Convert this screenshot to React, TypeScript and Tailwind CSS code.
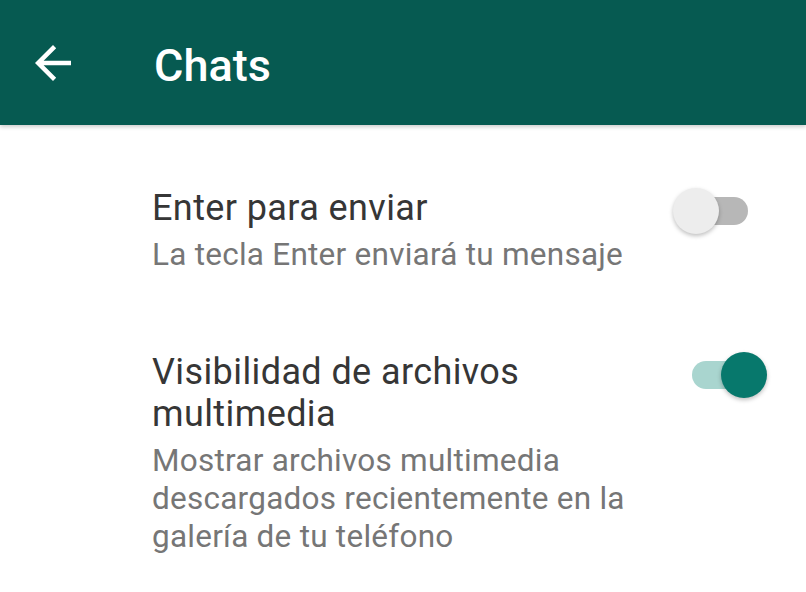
import { ReactNode } from "react";

function Toggle({ on }: { on: boolean }) {
  return (
    <div className="relative w-[94px] h-[46px] shrink-0">
      <div
        className={
          "absolute left-[19px] top-[9px] w-[56px] h-[28px] rounded-full " +
          (on ? "bg-[#a9d5cf]" : "bg-[#b7b7b7]")
        }
      />
      <div
        className={
          "absolute top-0 w-[46px] h-[46px] rounded-full shadow-[0_2px_4px_rgba(0,0,0,0.25)] " +
          (on ? "left-[48px] bg-[#07786c]" : "left-0 bg-[#ededed]")
        }
      />
    </div>
  );
}

function SettingRow({ title, summary, on }: { title: ReactNode; summary: ReactNode; on: boolean }) {
  return (
    <div className="flex items-start pl-[152px] pr-[39px]">
      <div className="w-[490px]">
        <div className="text-[36px] leading-[42px] tracking-[0.4px] text-[#363636]">{title}</div>
        <div className="mt-[7px] text-[31.5px] leading-[38px] tracking-[0.25px] text-[#767676]">{summary}</div>
      </div>
      <div className="ml-auto mt-[1px]">
        <Toggle on={on} />
      </div>
    </div>
  );
}

export default function App() {
  return (
    <div className="w-[806px] h-[592px] overflow-hidden bg-white" style={{ fontFamily: "Roboto, 'Noto Sans', sans-serif" }}>
      <header className="flex items-center h-[125px] bg-[#065a51] shadow-[0_2px_4px_rgba(0,0,0,0.2)]">
        <svg className="ml-[26px] w-[54px] h-[54px]" viewBox="0 0 24 24" fill="#ffffff">
          <path d="M20 11H7.83l5.59-5.59L12 4l-8 8 8 8 1.41-1.41L7.83 13H20v-2z" />
        </svg>
        <h1 className="ml-[74px] mt-[6px] text-[45px] leading-[56px] font-medium text-white">Chats</h1>
      </header>
      <main className="pt-[62px] flex flex-col gap-[77px]">
        <SettingRow
          title="Enter para enviar"
          summary="La tecla Enter enviará tu mensaje"
          on={false}
        />
        <SettingRow
          title="Visibilidad de archivos multimedia"
          summary="Mostrar archivos multimedia descargados recientemente en la galería de tu teléfono"
          on={true}
        />
      </main>
    </div>
  );
}
